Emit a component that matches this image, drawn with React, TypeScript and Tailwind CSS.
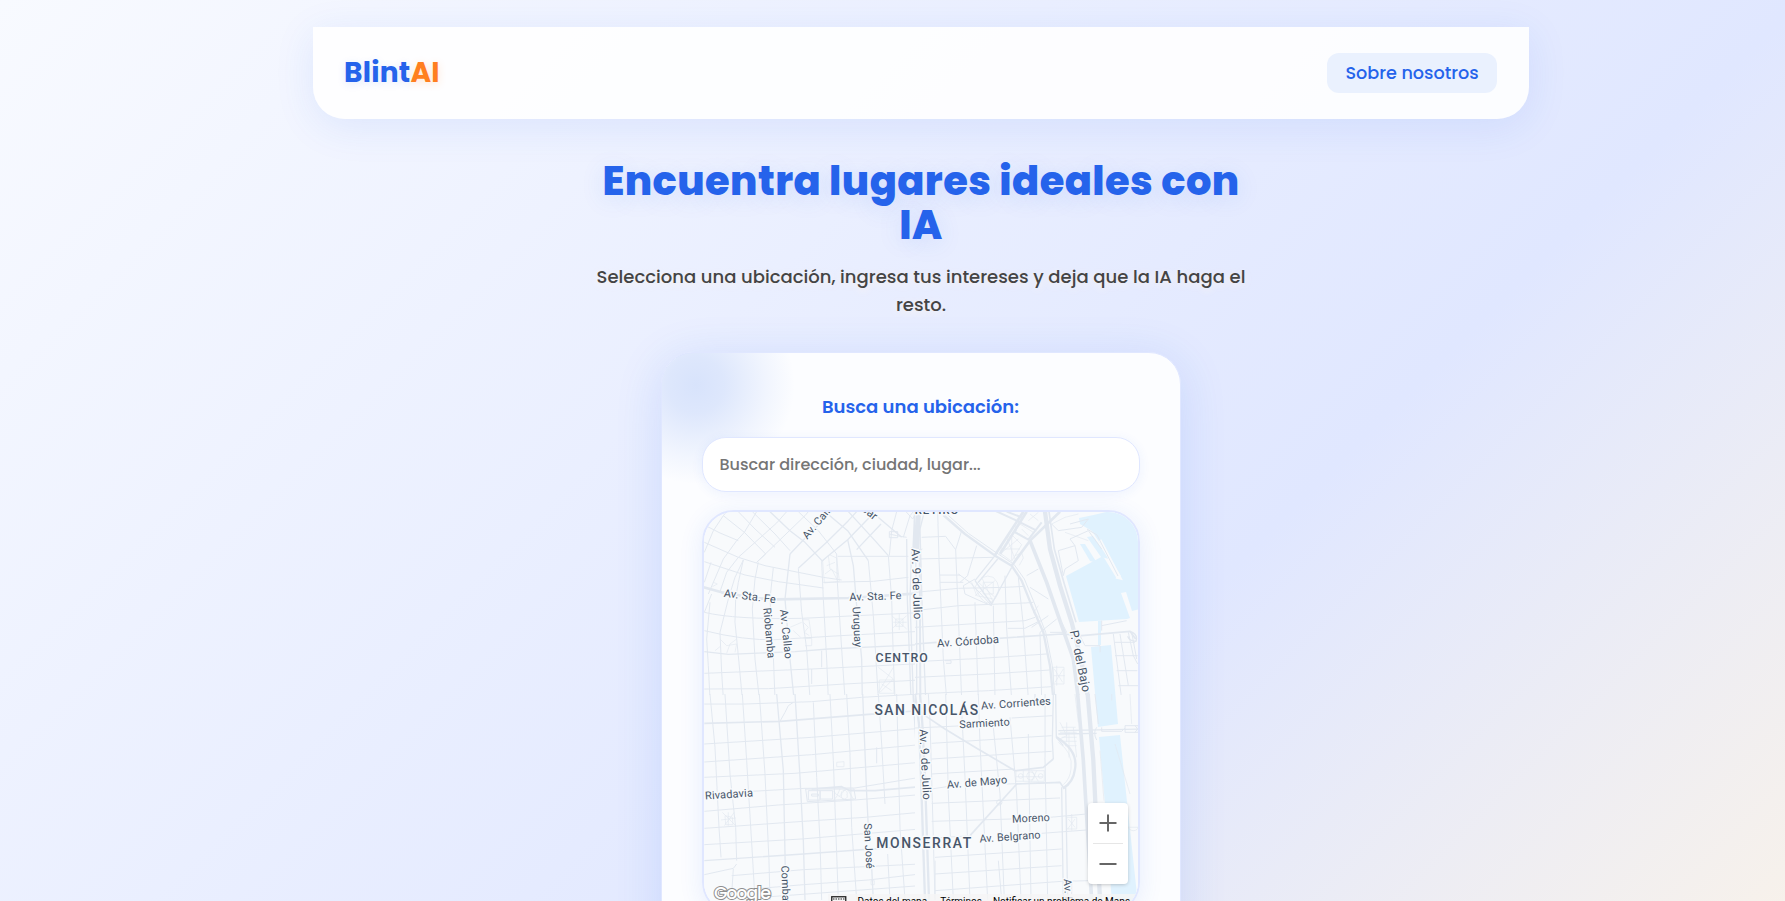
import React from 'react';

type Road = { d: string; w?: number };
type Label = { t: string; x: number; y: number; r?: number; size?: number; spacing?: number; weight?: number };

const r = (d: string, w = 3): Road => ({ d, w });

const northWest: Road[] = [
  r('M20 263L80 280L180 297L245 301L460 297L675 283', 8),
  r('M28 340Q120 362 320 358L675 341'),
  r('M28 395Q150 425 240 422L420 411L675 397'),
  r('M28 458L100 466L300 458L400 450L675 437', 4),
  r('M28 523L350 510L675 494'),
  r('M28 570L220 569L450 555L675 543'),
  r('M28 188L150 228L250 248L385 267'),
  r('M28 130L130 175L210 200L385 235L440 243'),
  r('M28 78L75 102L130 125M85 50L148 100L212 165L185 190'),
  r('M385 250L535 247L640 235'),
  r('M428 172L640 172'),
  r('M28 160L55 95L85 50L95 38M40 285L85 180L125 125L148 100L185 38M28 250L48 190'),
  r('M75 278L95 220L130 175L245 72L275 38'),
  r('M100 300L120 235L145 183M185 190L330 50L340 38'),
  r('M28 340L50 285'),
  r('M225 38L285 95L330 130L383 187M310 208L395 130L460 65L485 38', 4),
  r('M285 165L330 118L410 38', 4),
  r('M285 165L270 300L285 480L297 600', 4),
  r('M172 38L240 105L285 155M130 38L180 90L240 145M310 38L370 95L425 165L427 250'),
  r('M380 187L458 122L540 38', 4),
  r('M390 38L458 95L520 185M460 38L540 125L580 170M485 152L558 75M530 38L620 115', 4),
  r('M605 38L590 95L583 170M583 105L605 110L635 115M625 115L645 50L655 38M583 98h25v18h-25z'),
  r('M100 300L75 400L80 520L85 600M45 310L35 420L40 500L45 600'),
  r('M122 300L120 370L130 470L142 600M145 183L130 250L122 300'),
  r('M190 190L180 240L172 330L180 480L193 600'),
  r('M235 205L225 300L235 470L240 600'),
  r('M310 208L320 340L335 450L345 600'),
  r('M380 187L385 300L395 480L400 600M380 455v50'),
  r('M427 250L440 450L450 600'),
  r('M458 122L475 200L485 320L500 480L502 600', 4),
  r('M520 185L535 350L550 600'),
  r('M580 170L590 300L595 480L600 600'),
  r('M635 120L637 300L648 600', 4),
  r('M665 38L660 150', 16),
  r('M650 145L645 300L655 600M665 150L660 300L668 600', 4),
  r('M383 187l20 -20l22 10l8 70l-45 5zM390 225l20-15l15 30M400 170l5 40l25 15M395 200l25-10', 2),
  r('M590 350l45 40M635 350l-45 40M595 370h40M613 345v48M602 360l22 0l0 22l-22 0z', 2),
  r('M550 505l45 35l-40 40M595 505l-45 75M553 543h44v40h-44zM560 555l30 20', 2),
  r('M322 362l20 0l8 55l-25 0M285 385l35-15M295 395l22 20M325 370l15 15l-12 15l15 10M330 418h20v22h-20', 2),
  r('M75 420l20 20l30 -5l-5 25M125 420l-20 15l-10 28M60 455l15-12M55 250l12 5l-15 8', 2),
  r('M350 510v45M633 38l20 22l8-15'),
];

const northEast: Road[] = [
  r('M10 38L5 150', 16),
  r('M28 38L15 90L18 200L22 350L32 600M2 150L5 400L5 600', 4),
  r('M14 150L16 600', 6),
  r('M0 180L235 175M20 115L92 112L122 152L140 95M22 150L0 160'),
  r('M185 140L158 228M68 38L72 180L85 480L95 600M122 152L128 300L140 600'),
  r('M85 48L150 105L240 170L290 200L320 245L350 320L385 400L405 500L415 600', 7),
  r('M95 45L160 103L245 162L297 196L328 240L358 312L392 400L412 500L420 600', 3),
  r('M240 168L325 38M255 165L335 38', 8),
  r('M290 200L345 125L435 38', 8),
  r('M345 125L395 250L440 380L475 480L490 600', 11),
  r('M390 38L405 150L435 260L470 370L500 490L520 600', 13),
  r('M402 38L418 150L448 255L483 370', 5),
  r('M240 35L305 65L365 95M305 80L300 100L340 122L380 70M275 38L320 55', 6),
  r('M180 245L240 170M190 250L248 180M180 245L230 315L290 205', 4),
  r('M130 225L165 250L230 320L205 310L150 285L145 260L180 240M160 228L135 250'),
  r('M180 265q20-45 55-30q30 30 5 65q-30 35-60-35M190 250l50 45M180 290l60-45M170 250l15 40l50 10M200 235l35 75M205 250h30v35h-30z', 2),
  r('M265 125l25-18l30 30l-30 50l-35-25zM260 150h55M275 115l25 65M310 120l-55 45M290 105v80', 2),
  r('M315 75l40 25l-15 22l-40-25zM320 90l20 20M345 45l25 20M370 40l-30 25', 2),
  r('M0 280L130 268L270 265L330 262M0 335L130 320L330 312L355 310M0 385L330 365L360 355'),
  r('M0 435L65 430M250 418L440 405L500 410L645 397L662 420', 5),
  r('M75 250L145 250M75 228L135 228'),
  r('M0 488L200 478L395 465M0 535L220 525L405 513M0 585L220 575L410 563'),
  r('M180 310L190 600M235 320L240 600M270 230L275 390L290 600M310 235L325 380L340 600M375 400L380 600'),
  r('M278 388L330 388L375 365M335 230L370 210M345 265L400 300M400 350L350 385M425 360L375 400M440 370L455 400L405 400'),
  r('M300 170l20-8l5 15l-12 22M370 320l-15 22l20 15', 2),
  r('M410 75L430 95L500 85L520 60L465 75M430 155L480 140L490 185L450 210L445 230L430 155M480 140L465 120L520 95L560 150'),
  r('M410 75L450 55L490 45M450 100l70 25', 2),
  r('M415 505h32v50h-32zM418 510l25 40M445 510l-25 40M425 500v60M415 530h35', 2),
  r('M495 410L510 440L555 440L555 460M560 380L635 365M560 395L560 365M600 430h60M600 470h68M605 515h62M610 560h60'),
  r('M595 405L620 600M615 405L640 560M640 400L655 470L668 495M650 400L665 480M90 485h18v8h-15', 3),
  r('M645 397q25 8 18 30q-20 0-25-15', 4),
];

const southWest: Road[] = [
  r('M28 30L150 30L350 23L500 10L675 0'),
  r('M28 88L255 82L510 62L675 50', 5),
  r('M28 150L350 130L675 103'),
  r('M28 204L350 182L675 152'),
  r('M28 250L300 238L675 205'),
  r('M170 292L330 283L480 282L675 250'),
  r('M350 285L440 278L465 290L540 290L675 278', 5),
  r('M28 352L250 333L480 318L675 302'),
  r('M28 403L325 382L510 370L675 355'),
  r('M28 452L320 435L675 405'),
  r('M28 500L325 480L530 465L675 455', 4),
  r('M110 545L325 527L675 510'),
  r('M115 590L325 572L520 558L675 540'),
  r('M28 542L115 523L125 510M115 525L110 600L80 618M200 610L675 575'),
  r('M45 0L60 160L72 400L78 490'),
  r('M90 0L105 240L122 400L125 500'),
  r('M142 0L155 200L172 480L180 618'),
  r('M193 0L210 240L222 500L225 618'),
  r('M245 0L265 230L270 480L272 618', 4),
  r('M300 0L315 250L325 440L330 618', 4),
  r('M355 25L365 250L375 440L380 618'),
  r('M405 0L415 200L430 618'),
  r('M455 0L465 180L470 400L485 618'),
  r('M503 0L515 300L520 400M530 520L535 618', 4),
  r('M550 0L560 150L570 330M578 480L585 618M545 160v48'),
  r('M605 0L615 400L630 618'),
  r('M655 0L668 220L675 618M663 0L675 40', 6),
  r('M255 82L270 55L280 35L295 25'),
  r('M332 285h145l5 30l-145 8zM340 290h35v28h-35zM375 290h38v25h-38zM350 300h20v6h-20z', 3),
  r('M425 205l22-2v15h-22zM415 290l12 15l-12 15M435 285l-8 18l18 12M455 282l-22 25M440 302a9 9 0 1 0 16 0a9 9 0 1 0-16 0M460 290l15 25', 2),
  r('M82 355l40 40M118 355l-30 40M100 355v40M78 378l45-6M90 365l22 5l2 22l-22 0z', 2),
  r('M528 560v12h10v-12z', 2),
];

const southEast: Road[] = [
  r('M0 0L12 90L18 250L30 618M15 0L22 90L30 250L42 618', 7),
  r('M40 0L45 80L52 320L60 618'),
  r('M30 65L90 105L180 160L300 230', 5),
  r('M305 270L165 425', 5),
  r('M300 230L385 220L415 195M300 270L435 265L448 285', 5),
  r('M415 0L412 140L415 195M422 0L424 130L445 155', 4),
  r('M425 130Q490 170 480 225Q475 265 445 282', 7),
  r('M430 145Q475 175 468 225Q465 255 445 272', 2),
  r('M440 280L445 618M452 280L458 618', 4),
  r('M488 0L505 200L530 618', 11),
  r('M518 0L535 200L555 618', 13),
  r('M0 102L130 96M290 72L412 65M50 148L410 125M50 195L410 172'),
  r('M50 240L300 225M50 285L95 278M275 270L435 265'),
  r('M50 328L435 312M50 382L290 375M405 370L515 360'),
  r('M60 432L170 425M380 418L515 408M60 490L440 465M60 540L440 515M60 590L440 562L520 560', 3),
  r('M92 0L100 300L115 618M140 50L150 250L165 618M190 0L195 150L218 618'),
  r('M235 100L255 300L268 618M285 70L305 300L318 618M340 120L348 618M390 0L390 190L398 618'),
  r('M360 0V20M430 110L690 105M430 120L545 118', 4),
  r('M303 230h85v32h-85zM303 248h80M325 230v32M365 230l-15 32M350 230l20 32', 2),
  r('M335 246a12 12 0 1 0 24 0a12 12 0 1 0-24 0M310 246a7 7 0 1 0 14 0a7 7 0 1 0-14 0M370 246a7 7 0 1 0 14 0a7 7 0 1 0-14 0', 2),
  r('M435 85l20 40l-20 10M440 100h42M435 115h50M440 130h45M445 142h40M450 155h35M455 85v60M475 100l10 90M462 115v75', 2),
  r('M455 370h30v35h-30zM460 375l20 25M480 375l-22 30M470 360v50', 2),
  r('M545 100q-12 15 0 38M560 100l0 12l60 0l10-10M630 95h40v20h-40zM660 95l8 10l-8 10M540 0l10 90', 3),
  r('M645 0l5 90M600 150L645 300M555 170l12 150M590 0v20M640 398a10 8 0 1 0 30 0M640 400h40M480 0l10 85', 2),
  r('M245 325a8 8 0 1 0 16 0a8 8 0 1 0-16 0M60 500V618M250 500l10 118M470 560v40', 3),
];

const quadrants = [
  { id: 'nw', x: 695, y: 500, w: 660, h: 588, roads: northWest },
  { id: 'ne', x: 915, y: 500, w: 700, h: 588, roads: northEast },
  { id: 'sw', x: 695, y: 695, w: 660, h: 680, roads: southWest },
  { id: 'se', x: 915, y: 695, w: 700, h: 680, roads: southEast },
];

const labels: Label[] = [
  { t: 'Av. Callao', x: 820, y: 519.5, r: -50, size: 10.8 },
  { t: 'Alvear', x: 864, y: 508, r: 40, size: 11.3 },
  { t: 'RETIRO', x: 937, y: 511, size: 11.3, spacing: 1, weight: 500 },
  { t: 'Av. Sta. Fe', x: 750, y: 597, r: 7, size: 11 },
  { t: 'Av. Sta. Fe', x: 875.5, y: 597, r: -2, size: 11 },
  { t: 'Av. 9 de Julio', x: 917, y: 585, r: 88, size: 11.7 },
  { t: 'Riobamba', x: 769.5, y: 634, r: 85, size: 11 },
  { t: 'Av. Callao', x: 786.5, y: 635, r: 84, size: 11 },
  { t: 'Uruguay', x: 857.5, y: 628, r: 87 },
  { t: 'Av. Córdoba', x: 968, y: 642, r: -4, size: 11.3 },
  { t: 'P.º del Bajo', x: 1080.5, y: 662, r: 78, size: 12.2 },
  { t: 'CENTRO', x: 902, y: 659, size: 12.3, spacing: 1, weight: 500 },
  { t: 'SAN NICOLÁS', x: 927, y: 711, size: 13.9, spacing: 1.5, weight: 500 },
  { t: 'Av. Corrientes', x: 1016, y: 704, r: -4, size: 11 },
  { t: 'Sarmiento', x: 984.5, y: 724, r: -3 },
  { t: 'Av. 9 de Julio', x: 925.5, y: 765.5, r: 87, size: 11.7 },
  { t: 'Av. de Mayo', x: 977, y: 783, r: -5, size: 11 },
  { t: 'Rivadavia', x: 729, y: 795, r: -4, size: 11 },
  { t: 'Moreno', x: 1031, y: 819, r: -3 },
  { t: 'Av. Belgrano', x: 1010, y: 837.5, r: -4 },
  { t: 'San José', x: 869, y: 847, r: 87 },
  { t: 'MONSERRAT', x: 924.5, y: 844, size: 13.9, spacing: 1.6, weight: 500 },
  { t: 'Combate', x: 786, y: 889, r: 88 },
  { t: 'Av. Paseo', x: 1069, y: 904, r: 87 },
];

const water = [
  'M1079 519Q1095 516 1110 512H1140V610L1132 612L1126 593L1121 594L1130 619L1127 620L1079 623L1066 577L1103 557L1117 580L1121 577L1092 532L1080 525Z',
  'M1080 545L1085 545L1097 564L1090 562Z',
  'M1087 538L1093 537L1109 560L1101 558Z',
  'M1098 622L1101 622L1101 646L1098 646Z',
  'M1091 648L1111 646L1118 725L1098 728Z',
  'M1099 738L1120 736L1127 803L1105 805Z',
  'M1105 803H1127L1138 905H1112Z',
];

function CityMap() {
  return (
    <svg className="block h-[400px] w-full" viewBox="704 513 434 400" preserveAspectRatio="none" aria-hidden="true">
      <rect x="700" y="505" width="450" height="410" fill="#f8fafc" />
      {water.map((d) => (
        <path key={d} d={d} fill="#e0f2fe" />
      ))}
      <defs>
        {quadrants.map((q) => (
          <clipPath key={q.id} id={`clip-${q.id}`}>
            <rect width={q.w} height={q.h} />
          </clipPath>
        ))}
      </defs>
      {quadrants.map((q) => (
        <g key={q.id} transform={`translate(${q.x} ${q.y}) scale(0.33333)`} clipPath={`url(#clip-${q.id})`} fill="none" stroke="#e2e8f0" strokeLinejoin="round">
          {q.roads.map((road, i) => (
            <path key={i} d={road.d} strokeWidth={road.w} />
          ))}
        </g>
      ))}
      <path d="M1100 541L1120 579L1116 578" fill="none" stroke="#f8fafc" strokeWidth="3" />
      <path d="M1087 530L1097 536L1118 577" fill="none" stroke="#e2e8f0" strokeWidth="1" />
      <g fontFamily="Roboto, sans-serif" fill="#475569" stroke="#f8fafc" strokeWidth="3" strokeLinejoin="round" paintOrder="stroke" textAnchor="middle">
        {labels.map((l, i) => (
          <text
            key={i}
            x={l.x}
            y={l.y}
            dy="0.36em"
            fontSize={l.size ?? 10.8}
            fontWeight={l.weight ?? 400}
            letterSpacing={l.spacing ?? 0.15}
            transform={l.r ? `rotate(${l.r} ${l.x} ${l.y})` : undefined}
          >
            {l.t}
          </text>
        ))}
      </g>
    </svg>
  );
}

function ZoomControls() {
  return (
    <div className="absolute top-[291px] right-[10px] flex h-[81px] w-10 flex-col items-center rounded-sm bg-white shadow-[0_1px_4px_-1px_rgba(0,0,0,0.3)]">
      <button className="flex h-10 w-10 items-center justify-center" aria-label="Acercar">
        <svg width="18" height="18" viewBox="0 0 18 18" fill="#666">
          <path d="M17.5 8H10V0.5H8V8H0.5v2H8v7.5h2V10h7.5z" />
        </svg>
      </button>
      <div className="h-px w-[30px] bg-[#e6e6e6]" />
      <button className="flex h-10 w-10 items-center justify-center" aria-label="Alejar">
        <svg width="18" height="18" viewBox="0 0 18 18" fill="#666">
          <path d="M0.5 8h17v2h-17z" />
        </svg>
      </button>
    </div>
  );
}

function MapFooter() {
  return (
    <div className="absolute bottom-0 left-0 flex h-[18px] w-full font-[Roboto,sans-serif] text-[10px] text-black">
      <svg className="absolute bottom-0 left-0 h-[30px] w-[80px]" aria-hidden="true">
        <text x="10" y="17" fontFamily="Poppins, sans-serif" fontSize="17.5" letterSpacing="-1.2" fontWeight="500" fill="#fff" stroke="#8f8f8f" strokeWidth="2" paintOrder="stroke">
          Google
        </text>
      </svg>
      <div className="ml-[124px] flex h-[18px] grow items-start bg-[#f5f5f5]/80 leading-[15px] whitespace-nowrap">
        <svg className="mt-[1.5px] ml-[3px] block shrink-0" width="16" height="11" viewBox="0 0 16 11" fill="none" stroke="#222" aria-hidden="true">
          <rect x="0.75" y="0.75" width="14" height="9.5" strokeWidth="1.3" />
          <path d="M2 3h12M2 5.5h12M4 8h8" strokeDasharray="1.5 1" />
        </svg>
        <span className="ml-[11px]">Datos del mapa</span>
        <span className="ml-[13px]">Términos</span>
        <span className="ml-[11px]">Notificar un problema de Maps</span>
      </div>
    </div>
  );
}

export default function App() {
  return (
    <div className="h-[901px] overflow-hidden font-[Poppins,sans-serif]">
      <div className="h-[1215px] bg-[linear-gradient(135deg,#f8faff_0%,#e0e7ff_60%,#fff5e4_100%)] pt-[27px] pl-[57px]">
        <header className="mx-auto flex h-[92px] w-[1216px] items-center justify-between rounded-b-[32px] bg-white/90 px-8 shadow-[0_8px_40px_rgba(37,99,235,0.10)]">
          <div className="-ml-px text-[28px] leading-none font-bold tracking-[0.25px] text-[#2563eb] [text-shadow:0_2px_8px_rgba(37,99,235,0.13)]">
            Blint<span className="text-[#ff7f1f] [text-shadow:0_2px_8px_rgba(255,127,31,0.2)]">AI</span>
          </div>
          <a className="flex h-10 w-[170px] items-center justify-center rounded-xl bg-[#eaf1fe] text-[17.6px] font-medium text-[#2563eb]">Sobre nosotros</a>
        </header>

        <main className="flex flex-col items-center">
          <div className="mt-10 w-[660px] text-center">
            <h1 className="text-[40px] leading-[44px] font-extrabold tracking-[0.4px] text-[#2563eb] [text-shadow:0_4px_24px_rgba(37,99,235,0.13)]">
              Encuentra lugares ideales con IA
            </h1>
            <p className="mt-4 text-[18px] leading-[28px] font-medium text-[#444] [text-shadow:0_2px_8px_rgba(255,247,237,0.9)]">
              Selecciona una ubicación, ingresa tus intereses y deja que la IA haga el resto.
            </p>
          </div>

          <section className="mt-[32.5px] h-[820px] w-[520px] rounded-[32px] shadow-[0_8px_48px_rgba(37,99,235,0.14)]">
            <div className="relative flex h-full flex-col overflow-hidden rounded-[32px] border-[1.5px] border-[#e0e7ff] bg-[#fcfdff] pt-10 pr-[40.5px] pl-[39.5px]">
              <div className="absolute -top-[68px] -left-[66px] h-[200px] w-[200px] bg-[radial-gradient(circle,rgba(37,99,235,0.17)_0%,rgba(37,99,235,0.14)_20%,rgba(37,99,235,0.05)_50%,rgba(37,99,235,0)_70%)]" />
              <label className="relative text-center text-[18px] leading-[28px] font-semibold text-[#2563eb]">Busca una ubicación:</label>
              <input
                className="relative mt-[16.5px] h-[55px] shrink-0 rounded-[24px] border-[1.5px] border-[#e0e7ff] bg-white px-[17px] text-[16px] font-medium shadow-[0_2px_12px_rgba(37,99,235,0.07)] outline-none placeholder:text-[#757575]"
                placeholder="Buscar dirección, ciudad, lugar..."
              />
              <div className="relative mt-[18px] h-[404px] shrink-0 overflow-hidden rounded-[32px] border-2 border-[#e0e7ff] shadow-[0_4px_24px_rgba(37,99,235,0.10)]">
                <CityMap />
                <ZoomControls />
                <MapFooter />
              </div>
            </div>
          </section>
        </main>
      </div>
    </div>
  );
}
